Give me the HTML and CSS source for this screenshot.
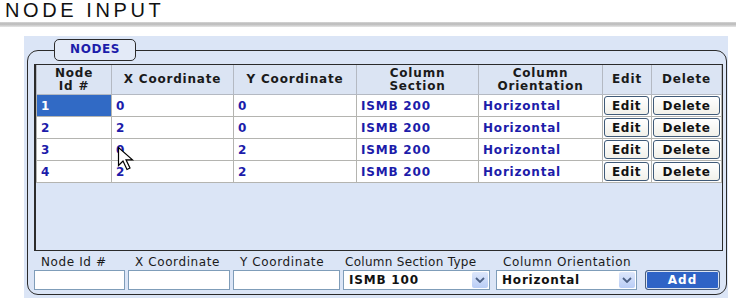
FILE: index.html
```html
<!DOCTYPE html>
<html lang="en">
<head>
    <meta charset="UTF-8">
    <title>Node Input</title>
    <link rel="stylesheet" href="styles.css">
</head>
<body>

    <h1 class="title">NODE INPUT</h1>
    <div class="rule"></div>

    <div class="panel">
        <fieldset class="nodes">
            <legend>NODES</legend>

            <!-- Node grid -->
            <div class="grid-box">
                <table class="node-table">
                    <colgroup>
                        <col class="c-id">
                        <col class="c-x">
                        <col class="c-y">
                        <col class="c-sec">
                        <col class="c-ori">
                        <col class="c-edit">
                        <col class="c-del">
                    </colgroup>
                    <thead>
                        <tr>
                            <th>Node<br>Id #</th>
                            <th>X Coordinate</th>
                            <th>Y Coordinate</th>
                            <th>Column<br>Section</th>
                            <th>Column<br>Orientation</th>
                            <th>Edit</th>
                            <th>Delete</th>
                        </tr>
                    </thead>
                    <tbody>
                        <tr>
                            <td class="selected">1</td>
                            <td>0</td>
                            <td>0</td>
                            <td>ISMB 200</td>
                            <td>Horizontal</td>
                            <td class="btn-cell"><button class="row-btn edit">Edit</button></td>
                            <td class="btn-cell"><button class="row-btn delete">Delete</button></td>
                        </tr>
                        <tr>
                            <td>2</td>
                            <td>2</td>
                            <td>0</td>
                            <td>ISMB 200</td>
                            <td>Horizontal</td>
                            <td class="btn-cell"><button class="row-btn edit">Edit</button></td>
                            <td class="btn-cell"><button class="row-btn delete">Delete</button></td>
                        </tr>
                        <tr>
                            <td>3</td>
                            <td>0</td>
                            <td>2</td>
                            <td>ISMB 200</td>
                            <td>Horizontal</td>
                            <td class="btn-cell"><button class="row-btn edit">Edit</button></td>
                            <td class="btn-cell"><button class="row-btn delete">Delete</button></td>
                        </tr>
                        <tr>
                            <td>4</td>
                            <td>2</td>
                            <td>2</td>
                            <td>ISMB 200</td>
                            <td>Horizontal</td>
                            <td class="btn-cell"><button class="row-btn edit">Edit</button></td>
                            <td class="btn-cell"><button class="row-btn delete">Delete</button></td>
                        </tr>
                    </tbody>
                </table>
            </div>

            <!-- Entry row -->
            <div class="entry">
                <div class="field f-id">
                    <label>Node Id #</label>
                    <div class="box"></div>
                </div>
                <div class="field f-x">
                    <label>X Coordinate</label>
                    <div class="box"></div>
                </div>
                <div class="field f-y">
                    <label>Y Coordinate</label>
                    <div class="box"></div>
                </div>
                <div class="field f-sec">
                    <label class="tight">Column Section Type</label>
                    <div class="box combo">
                        <span>ISMB 100</span>
                        <span class="drop">
                            <svg width="10" height="6" viewBox="0 0 10 6"><path d="M1 1 L5 5 L9 1" fill="none" stroke="#4d6185" stroke-width="1.8"/></svg>
                        </span>
                    </div>
                </div>
                <div class="field f-ori">
                    <label>Column Orientation</label>
                    <div class="box combo">
                        <span>Horizontal</span>
                        <span class="drop">
                            <svg width="10" height="6" viewBox="0 0 10 6"><path d="M1 1 L5 5 L9 1" fill="none" stroke="#4d6185" stroke-width="1.8"/></svg>
                        </span>
                    </div>
                </div>
                <div class="field f-add">
                    <button class="add">Add</button>
                </div>
            </div>
        </fieldset>
    </div>

    <!-- mouse pointer over the grid -->
    <svg class="cursor" width="20" height="25" viewBox="0 0 20 25">
        <path d="M1.5 1.5 L1.5 19.5 L6 15 L10 23.5 L13 22 L9 13.8 L15.5 13.8 Z" fill="#fff" stroke="#000" stroke-width="1.2" stroke-linejoin="miter"/>
    </svg>

</body>
</html>
```

FILE: styles.css
```css
body {
    margin: 0;
    background-color: #fff;
    font-family: 'DejaVu Sans', Verdana, sans-serif;
    position: relative;
}

.title {
    margin: 0;
    padding: 0 0 0 5px;
    height: 22px;
    font-family: 'Liberation Sans', Arial, sans-serif;
    font-weight: normal;
    font-size: 20px;
    line-height: 21px;
    letter-spacing: 3.6px;
    color: #111;
}

.rule {
    height: 5px;
    background: linear-gradient(#d6d6d6, #b9b9b9 40%, #e6e6e6);
}

.panel {
    margin: 9px 8px 0 24px;
    padding: 3px 3px 3px 3px;
    background-color: #dbe5f6;
}

/* Fieldset */
.nodes {
    margin: 0;
    padding: 3px 3px 4px 6px;
    border: 1px solid #2b2b2b;
    border-radius: 11px;
}

.nodes legend {
    margin-left: 20px;
    padding: 0 15px;
    height: 20px;
    line-height: 19px;
    border: 1px solid #2b2b2b;
    border-radius: 5px;
    background-color: #e3eaf7;
    color: #1c1caa;
    font-size: 12px;
    font-weight: bold;
    letter-spacing: 0.6px;
}

/* Grid */
.grid-box {
    height: 185px;
    border: 1px solid #2b2b2b;
    border-left-width: 2px;
    background-color: #dbe5f6;
}

.node-table {
    border-collapse: collapse;
    table-layout: fixed;
    width: 685px;
    font-size: 12px;
    font-weight: bold;
    letter-spacing: 0.8px;
}

.c-id { width: 75px; }
.c-x { width: 122px; }
.c-y { width: 123px; }
.c-sec { width: 122px; }
.c-ori { width: 124px; }
.c-edit { width: 49px; }
.c-del { width: 70px; }

.node-table th {
    height: 29px;
    padding: 0;
    border: 1px solid #b4b9c2;
    border-top: none;
    background-color: #dbe4f3;
    color: #1a1a1a;
    line-height: 13px;
    text-align: center;
}

.node-table td {
    height: 21px;
    padding: 0 0 0 4px;
    border: 1px solid #b4b4b0;
    background-color: #fff;
    color: #1c1caa;
    white-space: nowrap;
}

.node-table td.selected {
    background-color: #316ac5;
    color: #fff;
}

.node-table td.btn-cell {
    padding: 0 0 0 1px;
}

.row-btn {
    display: block;
    height: 19px;
    padding: 0;
    border: 1px solid #3f5a78;
    border-radius: 3px;
    background: linear-gradient(#ffffff, #f2f1ea);
    color: #111;
    font-family: 'DejaVu Sans', Verdana, sans-serif;
    font-size: 12px;
    font-weight: bold;
    letter-spacing: 0.6px;
}

.row-btn.edit { width: 45px; }
.row-btn.delete { width: 67px; }

/* Entry row */
.entry {
    display: flex;
    align-items: flex-end;
    margin-top: 3px;
}

.field label {
    display: block;
    padding-left: 7px;
    height: 16px;
    line-height: 16px;
    font-size: 12px;
    letter-spacing: 0.6px;
    color: #1a1a1a;
    white-space: nowrap;
}

.field label.tight {
    padding-left: 2px;
    letter-spacing: 0.3px;
}

.box {
    box-sizing: border-box;
    height: 20px;
    border: 1px solid #7f9db9;
    background-color: #fff;
}

.f-id { width: 91px; margin-right: 3px; }
.f-x { width: 102px; margin-right: 3px; }
.f-y { width: 107px; margin-right: 3px; }
.f-sec { width: 147px; margin-right: 6px; }
.f-ori { width: 141px; margin-right: 8px; }
.f-add { width: 75px; }

.combo {
    display: flex;
    align-items: center;
    justify-content: space-between;
    padding: 0 1px 0 5px;
    font-size: 12px;
    font-weight: bold;
    letter-spacing: 0.8px;
    color: #111;
}

.drop {
    display: flex;
    align-items: center;
    justify-content: center;
    width: 16px;
    height: 16px;
    border-radius: 2px;
    background: linear-gradient(#dde7fb, #b9cdf6);
}

.add {
    display: block;
    width: 75px;
    height: 20px;
    padding: 0;
    border: 1px solid #4c5f7c;
    border-radius: 3px;
    background-color: #2f63c6;
    box-shadow: inset 0 0 0 1px #dce4f2;
    color: #fff;
    font-family: 'DejaVu Sans', Verdana, sans-serif;
    font-size: 12px;
    font-weight: bold;
    letter-spacing: 1px;
}

.cursor {
    position: absolute;
    left: 117px;
    top: 146px;
}
```
